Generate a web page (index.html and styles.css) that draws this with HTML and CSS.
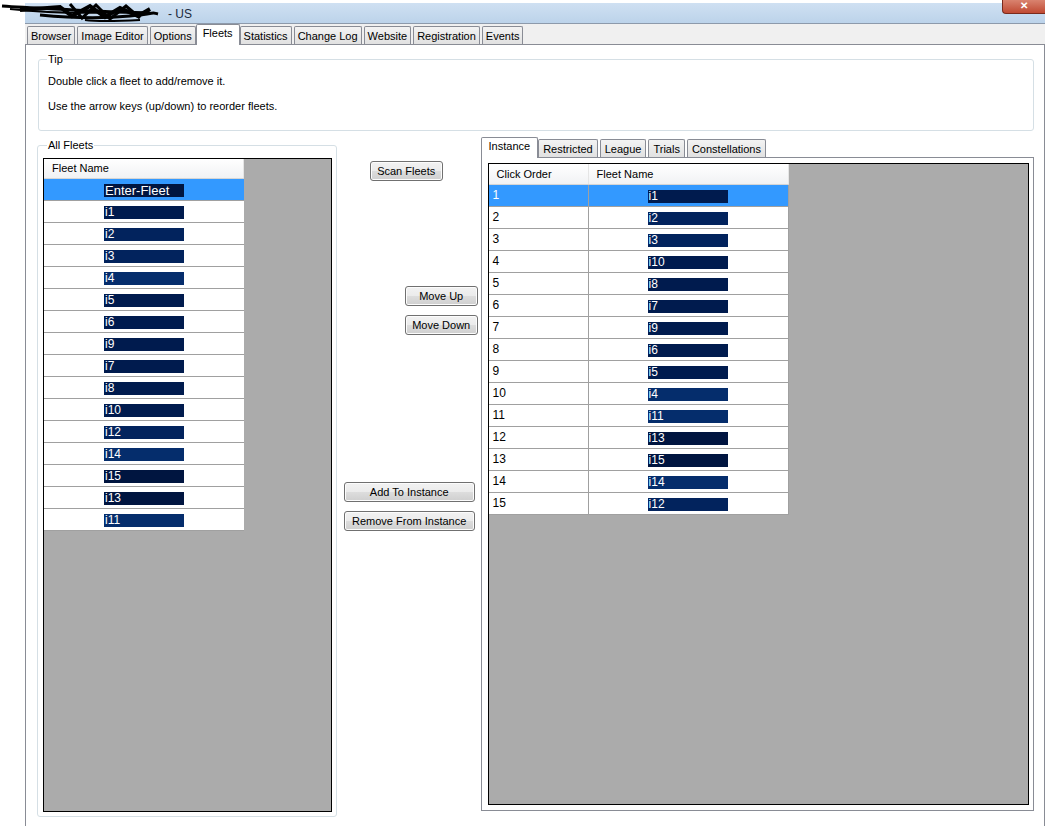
FILE: index.html
```html
<!DOCTYPE html>
<html lang="en">
<head>
  <meta charset="UTF-8">
  <title>Fleets - US</title>
  <link rel="stylesheet" href="styles.css">
</head>
<body>
  <div class="window">
    <div class="titlebar">
      <span class="title">- US</span>
      <div class="close">&#x2715;</div>
    </div>

    <div class="tabstrip">
      <div class="tab">Browser</div>
      <div class="tab">Image Editor</div>
      <div class="tab">Options</div>
      <div class="tab active">Fleets</div>
      <div class="tab">Statistics</div>
      <div class="tab">Change Log</div>
      <div class="tab">Website</div>
      <div class="tab">Registration</div>
      <div class="tab">Events</div>
    </div>

    <div class="panel">
      <fieldset class="group tip">
        <legend>Tip</legend>
        <p>Double click a fleet to add/remove it.</p>
        <p>Use the arrow keys (up/down) to reorder fleets.</p>
      </fieldset>

      <div class="lower">
        <fieldset class="group all-fleets">
          <legend>All Fleets</legend>
          <div class="grid grid-left">
            <div class="grid-head">
              <div class="hcell col-name">Fleet Name</div>
            </div>
            <div class="grid-row selected"><div class="cell col-name"><span class="fleet c0 big">Enter-Fleet</span></div></div>
            <div class="grid-row"><div class="cell col-name"><span class="fleet c1">i1</span></div></div>
            <div class="grid-row"><div class="cell col-name"><span class="fleet c2">i2</span></div></div>
            <div class="grid-row"><div class="cell col-name"><span class="fleet c2">i3</span></div></div>
            <div class="grid-row"><div class="cell col-name"><span class="fleet c3">i4</span></div></div>
            <div class="grid-row"><div class="cell col-name"><span class="fleet c1">i5</span></div></div>
            <div class="grid-row"><div class="cell col-name"><span class="fleet c1">i6</span></div></div>
            <div class="grid-row"><div class="cell col-name"><span class="fleet c1">i9</span></div></div>
            <div class="grid-row"><div class="cell col-name"><span class="fleet c1">i7</span></div></div>
            <div class="grid-row"><div class="cell col-name"><span class="fleet c1">i8</span></div></div>
            <div class="grid-row"><div class="cell col-name"><span class="fleet c1">i10</span></div></div>
            <div class="grid-row"><div class="cell col-name"><span class="fleet c2">i12</span></div></div>
            <div class="grid-row"><div class="cell col-name"><span class="fleet c3">i14</span></div></div>
            <div class="grid-row"><div class="cell col-name"><span class="fleet c0">i15</span></div></div>
            <div class="grid-row"><div class="cell col-name"><span class="fleet c0">i13</span></div></div>
            <div class="grid-row"><div class="cell col-name"><span class="fleet c3">i11</span></div></div>
          </div>
        </fieldset>

        <div class="actions">
          <button class="btn btn-scan">Scan Fleets</button>
          <button class="btn btn-move btn-up">Move Up</button>
          <button class="btn btn-move">Move Down</button>
          <button class="btn btn-wide btn-add">Add To Instance</button>
          <button class="btn btn-wide">Remove From Instance</button>
        </div>

        <div class="subtabs">
          <div class="subtab-strip">
            <div class="tab active">Instance</div>
            <div class="tab">Restricted</div>
            <div class="tab">League</div>
            <div class="tab">Trials</div>
            <div class="tab">Constellations</div>
          </div>
          <div class="subtab-page">
            <div class="grid grid-right">
              <div class="grid-head">
                <div class="hcell col-order">Click Order</div>
                <div class="hcell col-name">Fleet Name</div>
              </div>
              <div class="grid-row selected"><div class="cell col-order">1</div><div class="cell col-name"><span class="fleet c1">i1</span></div></div>
              <div class="grid-row"><div class="cell col-order">2</div><div class="cell col-name"><span class="fleet c2">i2</span></div></div>
              <div class="grid-row"><div class="cell col-order">3</div><div class="cell col-name"><span class="fleet c2">i3</span></div></div>
              <div class="grid-row"><div class="cell col-order">4</div><div class="cell col-name"><span class="fleet c1">i10</span></div></div>
              <div class="grid-row"><div class="cell col-order">5</div><div class="cell col-name"><span class="fleet c1">i8</span></div></div>
              <div class="grid-row"><div class="cell col-order">6</div><div class="cell col-name"><span class="fleet c1">i7</span></div></div>
              <div class="grid-row"><div class="cell col-order">7</div><div class="cell col-name"><span class="fleet c1">i9</span></div></div>
              <div class="grid-row"><div class="cell col-order">8</div><div class="cell col-name"><span class="fleet c1">i6</span></div></div>
              <div class="grid-row"><div class="cell col-order">9</div><div class="cell col-name"><span class="fleet c1">i5</span></div></div>
              <div class="grid-row"><div class="cell col-order">10</div><div class="cell col-name"><span class="fleet c3">i4</span></div></div>
              <div class="grid-row"><div class="cell col-order">11</div><div class="cell col-name"><span class="fleet c3">i11</span></div></div>
              <div class="grid-row"><div class="cell col-order">12</div><div class="cell col-name"><span class="fleet c0">i13</span></div></div>
              <div class="grid-row"><div class="cell col-order">13</div><div class="cell col-name"><span class="fleet c0">i15</span></div></div>
              <div class="grid-row"><div class="cell col-order">14</div><div class="cell col-name"><span class="fleet c3">i14</span></div></div>
              <div class="grid-row"><div class="cell col-order">15</div><div class="cell col-name"><span class="fleet c2">i12</span></div></div>
            </div>
          </div>
        </div>
      </div>
    </div>
  </div>

  <!-- redacted window title -->
  <svg class="scribble" width="165" height="26" viewBox="0 0 165 26">
    <path d="M2 6 C30 8 60 9 95 11 S140 12 150 13" stroke="#000" stroke-width="3" fill="none"/>
    <path d="M20 10 L60 7 L72 16 L90 6 L105 17 L120 8 L138 16 L150 9" stroke="#000" stroke-width="4" fill="none"/>
    <path d="M40 15 C70 18 100 19 130 16 S150 12 158 14" stroke="#000" stroke-width="3" fill="none"/>
    <path d="M70 4 L82 18 L96 5 L110 19 L126 6 L140 18" stroke="#000" stroke-width="3" fill="none"/>
    <path d="M10 9 C40 12 80 14 118 12" stroke="#000" stroke-width="2" fill="none"/>
    <path d="M85 20 C100 22 120 21 140 20" stroke="#000" stroke-width="2" fill="none"/>
  </svg>
</body>
</html>
```

FILE: styles.css
```css
body {
  margin: 0;
  background-color: #fff;
  font-family: "Liberation Sans", Arial, sans-serif;
  font-size: 11px;
  color: #000;
  position: relative;
}
.window {
  margin-left: 25px;
  width: 1020px;
  height: 826px;
  display: flex;
  flex-direction: column;
  overflow: hidden;
}
.titlebar {
  height: 24px;
  flex: none;
  display: flex;
  align-items: flex-start;
  background: linear-gradient(to bottom, #fff 0, #fff 3px, #cfe0f2 3px, #bcd3ea 23px, #8d9aab 23px);
}
.title {
  margin: 7px 0 0 143px;
  font-size: 12px;
  color: #1b2a3c;
}
.close {
  margin-left: auto;
  width: 43px;
  height: 14px;
  box-sizing: border-box;
  background: linear-gradient(to bottom, #d9836f, #c04a33);
  border: 1px solid #7a2a1c;
  border-top: none;
  border-right: none;
  border-radius: 0 0 0 4px;
  color: #fff;
  font-size: 10px;
  line-height: 12px;
  text-align: center;
  font-weight: bold;
}
.scribble {
  position: absolute;
  top: 0;
  left: 0;
}

/* tabs */
.tabstrip,
.subtab-strip {
  display: flex;
  align-items: flex-end;
  gap: 2px;
  background-color: #f0f0f0;
  border-bottom: 1px solid #898c95;
}
.tabstrip {
  height: 20px;
  padding-left: 2px;
  flex: none;
}
.subtab-strip {
  height: 20px;
  background-color: #fff;
}
.tab {
  height: 18px;
  line-height: 18px;
  padding: 0 3px;
  border: 1px solid #898c95;
  border-bottom: none;
  border-radius: 2px 2px 0 0;
  background: linear-gradient(to bottom, #f3f3f3, #e1e1e1);
  white-space: nowrap;
  box-sizing: border-box;
}
.subtab-strip .tab {
  padding: 0 4px;
}
.tab.active {
  height: 21px;
  line-height: 17px;
  margin: 0 -2px -1px;
  padding: 0 6px;
  background: #fff;
  position: relative;
  z-index: 1;
}
.subtab-strip .tab.active {
  margin-left: 0;
  padding: 0 7px;
}

/* main page */
.panel {
  flex: 1;
  background-color: #fff;
  border-left: 1px solid #898c95;
  border-right: 1px solid #898c95;
  padding: 8px 10px 0 11px;
}
.group {
  margin: 0;
  padding: 0;
  border: 1px solid #d5dfe5;
  border-radius: 3px;
  min-width: 0;
}
.group legend {
  padding: 0 1px;
  margin-left: 4px;
  line-height: 13px;
  color: #000;
}
.tip {
  margin-left: 1px;
  height: 78px;
  box-sizing: border-box;
  padding: 0 9px;
}
.tip legend {
  margin-left: -1px;
}
.tip p {
  margin: 9px 0 0;
  line-height: 13px;
}
.tip p + p {
  margin-top: 12px;
}

.lower {
  display: flex;
  align-items: flex-start;
  margin-top: 6px;
}
.all-fleets {
  width: 300px;
  box-sizing: border-box;
  margin-top: 2px;
  padding: 6px 4px 4px 5px;
}
.actions {
  width: 144px;
  display: flex;
  flex-direction: column;
  align-items: flex-start;
  padding-top: 24px;
}
.btn {
  height: 20px;
  padding: 0;
  font-family: inherit;
  font-size: 11px;
  color: #000;
  background: linear-gradient(to bottom, #f2f2f2 0, #ebebeb 50%, #dddddd 50%, #cfcfcf 100%);
  border: 1px solid #707070;
  border-radius: 3px;
  box-shadow: inset 0 0 0 1px #fcfcfc;
}
.btn-scan {
  width: 73px;
  margin-left: 33px;
}
.btn-move {
  width: 73px;
  margin-left: 68px;
  margin-top: 9px;
}
.btn-up {
  margin-top: 105px;
}
.btn-wide {
  width: 131px;
  margin-left: 7px;
  margin-top: 9px;
}
.btn-add {
  margin-top: 147px;
}

.subtabs {
  width: 554px;
}
.subtab-page {
  height: 653px;
  box-sizing: border-box;
  border: 1px solid #898c95;
  border-top: none;
  padding: 5px 4px 5px 6px;
}

/* data grids */
.grid {
  background-color: #ababab;
  border: 1px solid #000;
  box-sizing: border-box;
}
.grid-left {
  width: 289px;
  height: 654px;
}
.grid-right {
  height: 100%;
}
.grid-head {
  display: flex;
  height: 19px;
  background: linear-gradient(to bottom, #fff, #f1f2f4);
  border-bottom: 1px solid #d5d5d5;
  width: 200px;
}
.grid-right .grid-head {
  width: 300px;
  height: 20px;
}
.hcell {
  line-height: 19px;
  padding-left: 8px;
  box-sizing: border-box;
  border-right: 1px solid #e5e5e5;
}
.grid-right .hcell {
  line-height: 20px;
}
.grid-row {
  display: flex;
  height: 21px;
  border-bottom: 1px solid #a0a0a0;
  background-color: #fff;
  width: 200px;
}
.grid-right .grid-row {
  width: 300px;
}
.grid-row.selected {
  background-color: #3399ff;
  color: #fff;
}
.col-order {
  width: 100px;
}
.col-name {
  width: 200px;
}
.cell {
  box-sizing: border-box;
  height: 21px;
  line-height: 21px;
}
.grid-right .cell {
  border-right: 1px solid #a0a0a0;
}
.cell.col-order {
  padding-left: 4px;
  font-size: 12px;
}
.cell.col-name {
  padding: 5px 0 0 60px;
}
.grid-right .cell.col-name {
  padding-left: 59px;
  padding-top: 5px;
}
.fleet {
  display: block;
  width: 80px;
  height: 13px;
  line-height: 13px;
  color: #fff;
  font-size: 12px;
  padding-left: 1px;
  box-sizing: border-box;
}
.fleet.big {
  font-size: 13px;
}
.c0 { background-color: #001540; }
.c1 { background-color: #001b4e; }
.c2 { background-color: #02235d; }
.c3 { background-color: #052d6c; }
```
